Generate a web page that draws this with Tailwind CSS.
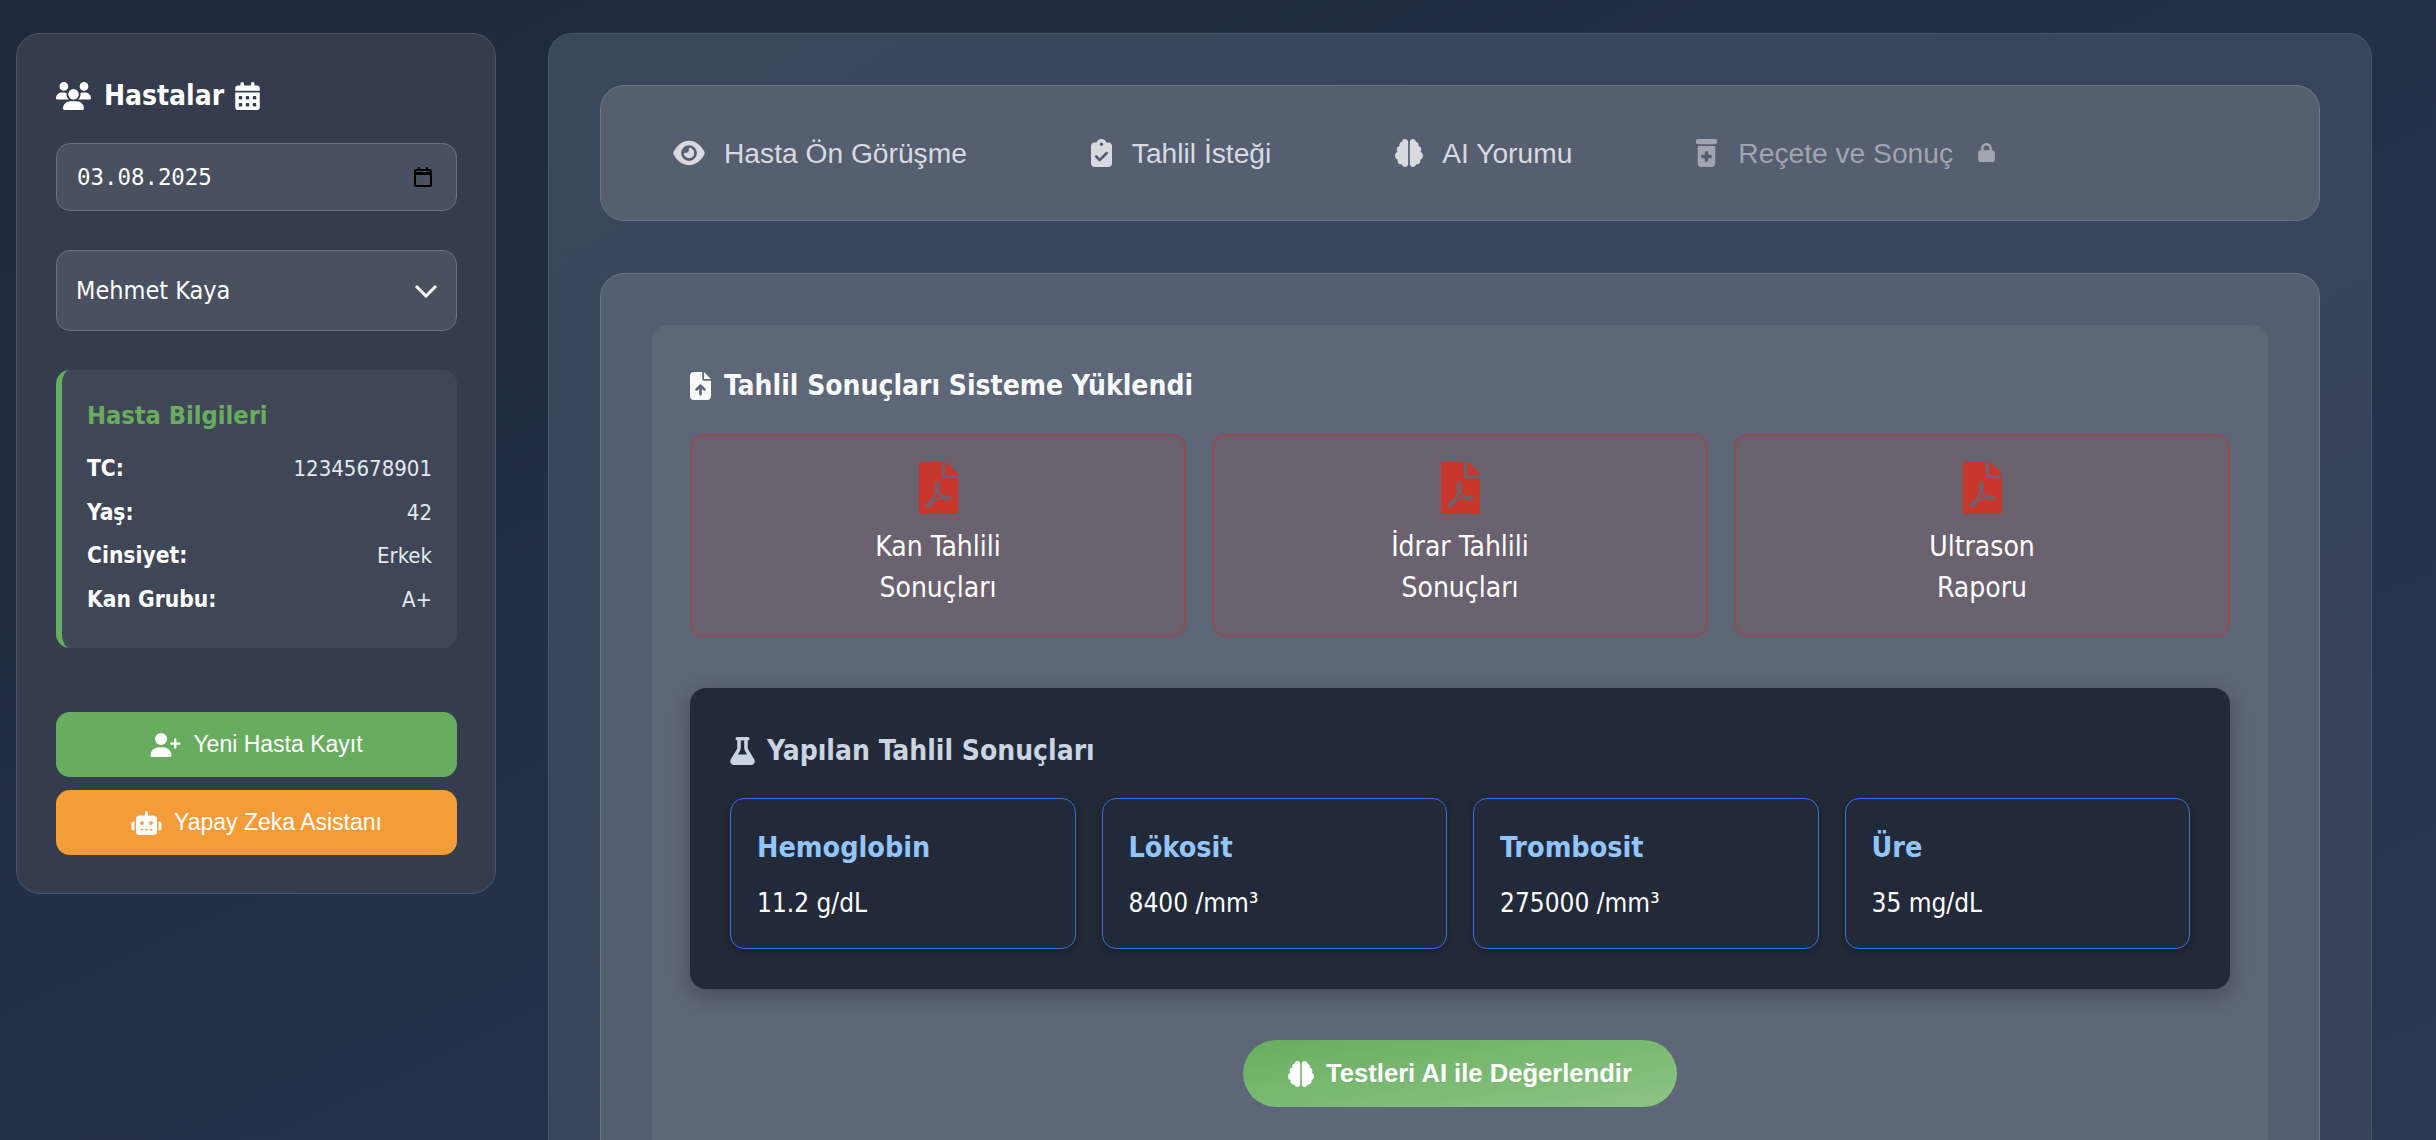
<!DOCTYPE html>
<html lang="tr">
  <head>
    <meta charset="UTF-8" />
    <script src="https://cdn.jsdelivr.net/npm/@tailwindcss/browser@4"></script>
  </head>
  <body class="h-[1140px] overflow-hidden bg-gradient-to-br from-[#1e293b] to-[#2b3753] font-['DejaVu_Sans',sans-serif] font-stretch-condensed text-white">
    <div class="flex items-start gap-[52px] pl-4 pr-16 pt-[33px]">
      <!-- Sidebar -->
      <aside class="flex h-[861px] w-[480px] shrink-0 flex-col rounded-3xl border border-[#4c5566] bg-[#343c4d] pl-[39px] pr-[38px] pt-[38px]">
        <h2 class="flex h-[47px] items-center gap-[13px] text-[28px] font-bold">
          <svg class="h-7 w-[35px] fill-white" viewBox="0 0 640 512"><path d="M144 0a80 80 0 1 1 0 160A80 80 0 1 1 144 0zM512 0a80 80 0 1 1 0 160A80 80 0 1 1 512 0zM0 298.7C0 239.8 47.8 192 106.7 192h42.7c15.9 0 31 3.5 44.6 9.7c-1.3 7.2-1.9 14.7-1.9 22.3c0 38.2 16.8 72.5 43.3 96c-.2 0-.4 0-.7 0H21.3C9.6 320 0 310.4 0 298.7zM405.3 320c-.2 0-.4 0-.7 0c26.6-23.5 43.3-57.8 43.3-96c0-7.6-.7-15-1.9-22.3c13.6-6.3 28.7-9.7 44.6-9.7h42.7C592.2 192 640 239.8 640 298.7c0 11.8-9.6 21.3-21.3 21.3H405.3zM224 224a96 96 0 1 1 192 0 96 96 0 1 1 -192 0zM128 485.3C128 411.7 187.7 352 261.3 352H378.7C452.3 352 512 411.7 512 485.3c0 14.7-11.9 26.7-26.7 26.7H154.7c-14.7 0-26.7-11.9-26.7-26.7z"/></svg>
          <span>Hastalar</span>
          <svg class="-ml-[2px] h-7 w-[25px] fill-white" viewBox="0 0 448 512"><path d="M128 0c17.7 0 32 14.3 32 32V64H288V32c0-17.7 14.3-32 32-32s32 14.3 32 32V64h48c26.5 0 48 21.5 48 48v48H0V112C0 85.5 21.5 64 48 64H96V32c0-17.7 14.3-32 32-32zM0 192H448V464c0 26.5-21.5 48-48 48H48c-26.5 0-48-21.5-48-48V192zm64 80v32c0 8.8 7.2 16 16 16h32c8.8 0 16-7.2 16-16V272c0-8.8-7.2-16-16-16H80c-8.8 0-16 7.2-16 16zm128 0v32c0 8.8 7.2 16 16 16h32c8.8 0 16-7.2 16-16V272c0-8.8-7.2-16-16-16H208c-8.8 0-16 7.2-16 16zm144-16c-8.8 0-16 7.2-16 16v32c0 8.8 7.2 16 16 16h32c8.8 0 16-7.2 16-16V272c0-8.8-7.2-16-16-16H336zM64 400v32c0 8.8 7.2 16 16 16h32c8.8 0 16-7.2 16-16V400c0-8.8-7.2-16-16-16H80c-8.8 0-16 7.2-16 16zm144-16c-8.8 0-16 7.2-16 16v32c0 8.8 7.2 16 16 16h32c8.8 0 16-7.2 16-16V400c0-8.8-7.2-16-16-16H208zm112 16v32c0 8.8 7.2 16 16 16h32c8.8 0 16-7.2 16-16V400c0-8.8-7.2-16-16-16H336c-8.8 0-16 7.2-16 16z"/></svg>
        </h2>

        <div class="mt-[24px] flex h-[68px] items-center justify-between rounded-[14px] border border-[#69707f] bg-[#495060] pl-5 pr-[24px] font-['DejaVu_Sans_Mono',monospace] text-[22.4px] [font-stretch:normal]">
          <span class="pt-[2px]">03.08.2025</span>
          <svg class="h-5 w-[18px]" viewBox="0 0 18 20" fill="none" stroke="#000" stroke-width="2"><rect x="1" y="3" width="16" height="16" rx="1.5"/><path d="M1 6.5h16" stroke-width="3"/><path d="M5 0v3M13 0v3"/></svg>
        </div>

        <div class="mt-[39px] flex h-[81px] items-center justify-between rounded-[14px] border border-[#69707f] bg-[#495060] pl-[19px] pr-[18px] text-[25px]">
          <span>Mehmet Kaya</span>
          <svg class="h-[14px] w-[24px]" viewBox="0 0 24 14" fill="none" stroke="#fff" stroke-width="3"><path d="M2 2l10 10L22 2"/></svg>
        </div>

        <section class="mt-[39px] h-[278px] rounded-[14px] border-l-[6px] border-[#68ad5f] bg-[#3f4757] pl-[25px] pr-[25px] pt-[30px]">
          <h3 class="text-[25.2px] font-bold leading-[32px] text-[#68ad5f]">Hasta Bilgileri</h3>
          <dl class="mt-[15px] flex flex-col text-[22px] leading-[43.5px]">
            <div class="flex justify-between"><dt class="text-[22.6px] font-bold">TC:</dt><dd class="text-[#e2e8f0]">12345678901</dd></div>
            <div class="flex justify-between"><dt class="text-[22.6px] font-bold">Yaş:</dt><dd class="text-[#e2e8f0]">42</dd></div>
            <div class="flex justify-between"><dt class="text-[22.6px] font-bold">Cinsiyet:</dt><dd class="text-[#e2e8f0]">Erkek</dd></div>
            <div class="flex justify-between"><dt class="text-[22.6px] font-bold">Kan Grubu:</dt><dd class="text-[#e2e8f0]">A+</dd></div>
          </dl>
        </section>

        <div class="mt-[64px] flex flex-col gap-[13px] font-['Liberation_Sans',sans-serif] text-[23px] [font-stretch:normal]">
          <div class="flex h-[65px] items-center justify-center gap-[12px] rounded-[14px] bg-[#68ad5f]">
            <svg class="h-[24px] w-[31px] fill-white" viewBox="0 0 640 512"><path d="M96 128a128 128 0 1 1 256 0A128 128 0 1 1 96 128zM0 482.3C0 383.8 79.8 304 178.3 304h91.4C368.2 304 448 383.8 448 482.3c0 16.4-13.3 29.7-29.7 29.7H29.7C13.3 512 0 498.7 0 482.3zM504 312V248H440c-13.3 0-24-10.7-24-24s10.7-24 24-24h64V136c0-13.3 10.7-24 24-24s24 10.7 24 24v64h64c13.3 0 24 10.7 24 24s-10.7 24-24 24H552v64c0 13.3-10.7 24-24 24s-24-10.7-24-24z"/></svg>
            <span>Yeni Hasta Kayıt</span>
          </div>
          <div class="flex h-[65px] items-center justify-center gap-[12px] rounded-[14px] bg-[#f39c38]">
            <svg class="h-[24px] w-[31px] fill-white" viewBox="0 0 640 512"><path d="M320 0c17.7 0 32 14.3 32 32V96H472c39.8 0 72 32.2 72 72V440c0 39.8-32.2 72-72 72H168c-39.8 0-72-32.2-72-72V168c0-39.8 32.2-72 72-72H288V32c0-17.7 14.3-32 32-32zM208 384c-8.8 0-16 7.2-16 16s7.2 16 16 16h32c8.8 0 16-7.2 16-16s-7.2-16-16-16H208zm96 0c-8.8 0-16 7.2-16 16s7.2 16 16 16h32c8.8 0 16-7.2 16-16s-7.2-16-16-16H304zm96 0c-8.8 0-16 7.2-16 16s7.2 16 16 16h32c8.8 0 16-7.2 16-16s-7.2-16-16-16H400zM264 256a40 40 0 1 0 -80 0 40 40 0 1 0 80 0zm152 40a40 40 0 1 0 0-80 40 40 0 1 0 0 80zM48 224H64V416H48c-26.5 0-48-21.5-48-48V272c0-26.5 21.5-48 48-48zm544 0c26.5 0 48 21.5 48 48v96c0 26.5-21.5 48-48 48H576V224h16z"/></svg>
            <span>Yapay Zeka Asistanı</span>
          </div>
        </div>
      </aside>

      <!-- Main -->
      <main class="h-[1200px] w-[1824px] shrink-0 rounded-3xl border border-[#4b5669] bg-gradient-to-br from-[#3a465a] to-[#38435a] px-[51px] pt-[51px]">
        <!-- Tabs -->
        <nav class="flex h-[136px] items-center gap-[124px] rounded-[24px] border border-[#6c7585] bg-[#565f70] pl-[72px] font-['Liberation_Sans',sans-serif] text-[28.2px] text-[#d7dae0] [font-stretch:normal]">
          <div class="flex items-center gap-[19px]">
            <svg class="h-7 w-[32px] fill-[#d7dae0]" viewBox="0 0 576 512"><path d="M288 32c-80.8 0-145.5 36.8-192.6 80.6C48.6 156 17.3 208 2.5 243.7c-3.3 7.9-3.3 16.7 0 24.6C17.3 304 48.6 356 95.4 399.4C142.5 443.2 207.2 480 288 480s145.5-36.8 192.6-80.6c46.8-43.5 78.1-95.4 93-131.1c3.3-7.9 3.3-16.7 0-24.6c-14.9-35.7-46.2-87.7-93-131.1C433.5 68.8 368.8 32 288 32zM144 256a144 144 0 1 1 288 0 144 144 0 1 1 -288 0zm144-64c0 35.3-28.7 64-64 64c-7.1 0-13.9-1.2-20.3-3.3c-5.5-1.8-11.9 1.6-11.7 7.4c.3 6.9 1.3 13.8 3.2 20.7c13.7 51.2 66.4 81.6 117.6 67.9s81.6-66.4 67.9-117.6c-11.1-41.5-47.8-69.4-88.6-71.1c-5.8-.2-9.2 6.1-7.4 11.7c2.1 6.4 3.3 13.2 3.3 20.3z"/></svg>
            <span>Hasta Ön Görüşme</span>
          </div>
          <div class="flex items-center gap-[20px]">
            <svg class="h-7 w-[21px] fill-[#d7dae0]" viewBox="0 0 384 512"><path d="M192 0c-41.8 0-77.4 26.7-90.5 64H64C28.7 64 0 92.7 0 128V448c0 35.3 28.7 64 64 64H320c35.3 0 64-28.7 64-64V128c0-35.3-28.7-64-64-64H282.5C269.4 26.7 233.8 0 192 0zm0 64a32 32 0 1 1 0 64 32 32 0 1 1 0-64zM305 273L177 401c-9.4 9.4-24.6 9.4-33.9 0L79 337c-9.4-9.4-9.4-24.6 0-33.9s24.6-9.4 33.9 0l47 47L271 239c9.4-9.4 24.6-9.4 33.9 0s9.4 24.6 0 33.9z"/></svg>
            <span>Tahlil İsteği</span>
          </div>
          <div class="flex items-center gap-[19px]">
            <svg class="h-7 w-7 fill-[#d7dae0]" viewBox="0 0 512 512"><path d="M184 0c30.9 0 56 25.1 56 56V456c0 30.9-25.1 56-56 56c-28.9 0-52.7-21.9-55.7-50.1c-5.2 1.4-10.7 2.1-16.3 2.1c-35.3 0-64-28.7-64-64c0-7.4 1.3-14.6 3.6-21.2C21.4 367.4 0 338.2 0 304c0-31.9 18.7-59.5 45.8-72.3C37.1 220.8 32 207 32 192c0-30.7 21.6-56.3 50.4-62.6C80.8 123.9 80 118 80 112c0-29.9 20.6-55.1 48.3-62.1C131.3 21.9 155.1 0 184 0zM328 0c28.9 0 52.6 21.9 55.7 49.9c27.8 7 48.3 32.1 48.3 62.1c0 6-.8 11.9-2.4 17.4c28.8 6.2 50.4 31.9 50.4 62.6c0 15-5.1 28.8-13.8 39.7C493.3 244.5 512 272.1 512 304c0 34.2-21.4 63.4-51.6 74.8c2.3 6.6 3.6 13.8 3.6 21.2c0 35.3-28.7 64-64 64c-5.6 0-11.1-.7-16.3-2.1c-3 28.2-26.8 50.1-55.7 50.1c-30.9 0-56-25.1-56-56V56c0-30.9 25.1-56 56-56z"/></svg>
            <span>AI Yorumu</span>
          </div>
          <div class="flex items-center gap-[21px] text-[#a0a5af]">
            <svg class="h-7 w-[21px] fill-[#a0a5af]" viewBox="0 0 384 512"><path d="M0 32C0 14.3 14.3 0 32 0H352c17.7 0 32 14.3 32 32V64c0 17.7-14.3 32-32 32H32C14.3 96 0 81.7 0 64V32zm32 96H352V448c0 35.3-28.7 64-64 64H96c-35.3 0-64-28.7-64-64V128zM160 240v48H112c-8.8 0-16 7.2-16 16v32c0 8.8 7.2 16 16 16h48v48c0 8.8 7.2 16 16 16h32c8.8 0 16-7.2 16-16V352h48c8.8 0 16-7.2 16-16V304c0-8.8-7.2-16-16-16H224V240c0-8.8-7.2-16-16-16H176c-8.8 0-16 7.2-16 16z"/></svg>
            <span>Reçete ve Sonuç</span>
            <svg class="ml-[4px] h-[19px] w-[17px] fill-[#a0a5af]" viewBox="0 0 448 512"><path d="M144 144v48H304V144c0-44.2-35.8-80-80-80s-80 35.8-80 80zM80 192V144C80 64.5 144.5 0 224 0s144 64.5 144 144v48h16c35.3 0 64 28.7 64 64V448c0 35.3-28.7 64-64 64H64c-35.3 0-64-28.7-64-64V256c0-35.3 28.7-64 64-64H80z"/></svg>
          </div>
        </nav>

        <!-- Content -->
        <section class="mt-[52px] h-[900px] rounded-[24px] border border-[#6c7585] bg-[#545f71] px-[51px] pt-[51px]">
          <div class="h-[860px] rounded-[16px] bg-[#5e6778] pl-[38px] pr-[38px] pt-[42px]">
            <h3 class="flex h-[38px] items-center gap-[13px] text-[28px] font-bold text-[#f8fafc]">
              <svg class="h-7 w-[21px] fill-[#f8fafc]" viewBox="0 0 384 512"><path d="M64 0C28.7 0 0 28.7 0 64V448c0 35.3 28.7 64 64 64H320c35.3 0 64-28.7 64-64V160H256c-17.7 0-32-14.3-32-32V0H64zM256 0V128H384L256 0zM216 408c0 13.3-10.7 24-24 24s-24-10.7-24-24V305.9l-31 31c-9.4 9.4-24.6 9.4-33.9 0s-9.4-24.6 0-33.9l72-72c9.4-9.4 24.6-9.4 33.9 0l72 72c9.4 9.4 9.4 24.6 0 33.9s-24.6 9.4-33.9 0l-31-31V408z"/></svg>
              <span>Tahlil Sonuçları Sisteme Yüklendi</span>
            </h3>

            <div class="mt-[29px] grid grid-cols-3 gap-[26px] text-center text-[28px] leading-[41px]">
              <div class="flex h-[203px] flex-col items-center rounded-[14px] border-2 border-[#8f4f57] bg-[#6b6270] pt-[26px]">
                <svg class="mb-[12px] h-[52px] w-[39px] fill-[#c9372c]" viewBox="0 0 384 512"><path d="M181.9 256.1c-5-16-4.9-46.9-2-46.9 8.4 0 7.6 36.9 2 46.9zm-1.7 47.2c-7.7 20.2-17.3 43.3-28.4 62.7 18.3-7 39-17.2 62.9-21.9-12.7-9.6-24.9-23.4-34.5-40.8zM86.1 428.1c0 .8 13.2-5.4 34.9-40.2-6.7 6.3-29.1 24.5-34.9 40.2zM248 160h136v328c0 13.3-10.7 24-24 24H24c-13.3 0-24-10.7-24-24V24C0 10.7 10.7 0 24 0h200v136c0 13.2 10.8 24 24 24zm-8 171.8c-20-12.2-33.3-29-42.7-53.8 4.5-18.5 11.6-46.6 6.2-64.2-4.7-29.4-42.4-26.5-47.8-6.8-5 18.3-.4 44.1 8.1 77-11.6 27.6-28.7 64.6-40.8 85.8-.1 0-.1.1-.2.1-27.1 13.9-73.6 44.5-54.5 68 5.6 6.9 16 10 21.5 10 17.9 0 35.7-18 61.1-61.8 25.8-8.5 54.1-19.1 79-23.2 21.7 11.8 47.1 19.5 64 19.5 29.2 0 31.2-32 19.7-43.4-13.9-13.6-54.3-9.7-73.6-7.2zM377 105L279 7c-4.5-4.5-10.6-7-17-7h-6v128h128v-6.1c0-6.3-2.5-12.4-7-16.9zm-74.1 255.3c4.1-2.7-2.5-11.9-42.8-9 37.1 15.8 42.8 9 42.8 9z"/></svg>
                <span>Kan Tahlili<br />Sonuçları</span>
              </div>
              <div class="flex h-[203px] flex-col items-center rounded-[14px] border-2 border-[#8f4f57] bg-[#6b6270] pt-[26px]">
                <svg class="mb-[12px] h-[52px] w-[39px] fill-[#c9372c]" viewBox="0 0 384 512"><path d="M181.9 256.1c-5-16-4.9-46.9-2-46.9 8.4 0 7.6 36.9 2 46.9zm-1.7 47.2c-7.7 20.2-17.3 43.3-28.4 62.7 18.3-7 39-17.2 62.9-21.9-12.7-9.6-24.9-23.4-34.5-40.8zM86.1 428.1c0 .8 13.2-5.4 34.9-40.2-6.7 6.3-29.1 24.5-34.9 40.2zM248 160h136v328c0 13.3-10.7 24-24 24H24c-13.3 0-24-10.7-24-24V24C0 10.7 10.7 0 24 0h200v136c0 13.2 10.8 24 24 24zm-8 171.8c-20-12.2-33.3-29-42.7-53.8 4.5-18.5 11.6-46.6 6.2-64.2-4.7-29.4-42.4-26.5-47.8-6.8-5 18.3-.4 44.1 8.1 77-11.6 27.6-28.7 64.6-40.8 85.8-.1 0-.1.1-.2.1-27.1 13.9-73.6 44.5-54.5 68 5.6 6.9 16 10 21.5 10 17.9 0 35.7-18 61.1-61.8 25.8-8.5 54.1-19.1 79-23.2 21.7 11.8 47.1 19.5 64 19.5 29.2 0 31.2-32 19.7-43.4-13.9-13.6-54.3-9.7-73.6-7.2zM377 105L279 7c-4.5-4.5-10.6-7-17-7h-6v128h128v-6.1c0-6.3-2.5-12.4-7-16.9zm-74.1 255.3c4.1-2.7-2.5-11.9-42.8-9 37.1 15.8 42.8 9 42.8 9z"/></svg>
                <span>İdrar Tahlili<br />Sonuçları</span>
              </div>
              <div class="flex h-[203px] flex-col items-center rounded-[14px] border-2 border-[#8f4f57] bg-[#6b6270] pt-[26px]">
                <svg class="mb-[12px] h-[52px] w-[39px] fill-[#c9372c]" viewBox="0 0 384 512"><path d="M181.9 256.1c-5-16-4.9-46.9-2-46.9 8.4 0 7.6 36.9 2 46.9zm-1.7 47.2c-7.7 20.2-17.3 43.3-28.4 62.7 18.3-7 39-17.2 62.9-21.9-12.7-9.6-24.9-23.4-34.5-40.8zM86.1 428.1c0 .8 13.2-5.4 34.9-40.2-6.7 6.3-29.1 24.5-34.9 40.2zM248 160h136v328c0 13.3-10.7 24-24 24H24c-13.3 0-24-10.7-24-24V24C0 10.7 10.7 0 24 0h200v136c0 13.2 10.8 24 24 24zm-8 171.8c-20-12.2-33.3-29-42.7-53.8 4.5-18.5 11.6-46.6 6.2-64.2-4.7-29.4-42.4-26.5-47.8-6.8-5 18.3-.4 44.1 8.1 77-11.6 27.6-28.7 64.6-40.8 85.8-.1 0-.1.1-.2.1-27.1 13.9-73.6 44.5-54.5 68 5.6 6.9 16 10 21.5 10 17.9 0 35.7-18 61.1-61.8 25.8-8.5 54.1-19.1 79-23.2 21.7 11.8 47.1 19.5 64 19.5 29.2 0 31.2-32 19.7-43.4-13.9-13.6-54.3-9.7-73.6-7.2zM377 105L279 7c-4.5-4.5-10.6-7-17-7h-6v128h128v-6.1c0-6.3-2.5-12.4-7-16.9zm-74.1 255.3c4.1-2.7-2.5-11.9-42.8-9 37.1 15.8 42.8 9 42.8 9z"/></svg>
                <span>Ultrason<br />Raporu</span>
              </div>
            </div>

            <!-- Results -->
            <div class="mt-[51px] h-[301px] rounded-[16px] bg-[#222938] px-10 pt-[41px] shadow-[0_6px_20px_rgba(0,0,0,0.3)]">
              <h4 class="flex h-[44px] items-center gap-[12px] text-[28px] font-bold text-[#cbd5e1]">
                <svg class="h-7 w-[25px] fill-[#cbd5e1]" viewBox="0 0 448 512"><path d="M288 0H160 128C110.3 0 96 14.3 96 32s14.3 32 32 32V196.8c0 11.8-3.3 23.5-9.5 33.5L10.3 406.2C3.6 417.2 0 429.7 0 442.6C0 480.9 31.1 512 69.4 512H378.6c38.3 0 69.4-31.1 69.4-69.4c0-12.8-3.6-25.4-10.3-36.4L329.5 230.4c-6.2-10.1-9.5-21.7-9.5-33.5V64c17.7 0 32-14.3 32-32s-14.3-32-32-32H288zM192 196.8V64h64V196.8c0 23.7 6.6 46.9 19 67.1L309.5 320h-171L173 263.9c12.4-20.2 19-43.4 19-67.1z"/></svg>
                <span>Yapılan Tahlil Sonuçları</span>
              </h4>
              <div class="mt-[25px] grid grid-cols-4 gap-[26px]">
                <div class="h-[151px] rounded-[14px] border border-[#3b6fd9] px-[26px] pt-[30px] shadow-[0_2px_8px_rgba(0,0,0,0.25)]">
                  <div class="text-[28.5px] font-bold leading-[38px] text-[#93c5fd]">Hemoglobin</div>
                  <div class="mt-[20px] text-[26px] leading-[32px]">11.2 g/dL</div>
                </div>
                <div class="h-[151px] rounded-[14px] border border-[#3b6fd9] px-[26px] pt-[30px] shadow-[0_2px_8px_rgba(0,0,0,0.25)]">
                  <div class="text-[28.5px] font-bold leading-[38px] text-[#93c5fd]">Lökosit</div>
                  <div class="mt-[20px] text-[26px] leading-[32px]">8400 /mm³</div>
                </div>
                <div class="h-[151px] rounded-[14px] border border-[#3b6fd9] px-[26px] pt-[30px] shadow-[0_2px_8px_rgba(0,0,0,0.25)]">
                  <div class="text-[28.5px] font-bold leading-[38px] text-[#93c5fd]">Trombosit</div>
                  <div class="mt-[20px] text-[26px] leading-[32px]">275000 /mm³</div>
                </div>
                <div class="h-[151px] rounded-[14px] border border-[#3b6fd9] px-[26px] pt-[30px] shadow-[0_2px_8px_rgba(0,0,0,0.25)]">
                  <div class="text-[28.5px] font-bold leading-[38px] text-[#93c5fd]">Üre</div>
                  <div class="mt-[20px] text-[26px] leading-[32px]">35 mg/dL</div>
                </div>
              </div>
            </div>

            <div class="mt-[51px] flex justify-center">
              <div class="flex h-[67px] w-[434px] items-center justify-center gap-[12px] rounded-full bg-gradient-to-br from-[#68ae5e] to-[#8dc486] font-['Liberation_Sans',sans-serif] text-[25.6px] font-bold [font-stretch:normal]">
                <svg class="h-[26px] w-[26px] fill-white" viewBox="0 0 512 512"><path d="M184 0c30.9 0 56 25.1 56 56V456c0 30.9-25.1 56-56 56c-28.9 0-52.7-21.9-55.7-50.1c-5.2 1.4-10.7 2.1-16.3 2.1c-35.3 0-64-28.7-64-64c0-7.4 1.3-14.6 3.6-21.2C21.4 367.4 0 338.2 0 304c0-31.9 18.7-59.5 45.8-72.3C37.1 220.8 32 207 32 192c0-30.7 21.6-56.3 50.4-62.6C80.8 123.9 80 118 80 112c0-29.9 20.6-55.1 48.3-62.1C131.3 21.9 155.1 0 184 0zM328 0c28.9 0 52.6 21.9 55.7 49.9c27.8 7 48.3 32.1 48.3 62.1c0 6-.8 11.9-2.4 17.4c28.8 6.2 50.4 31.9 50.4 62.6c0 15-5.1 28.8-13.8 39.7C493.3 244.5 512 272.1 512 304c0 34.2-21.4 63.4-51.6 74.8c2.3 6.6 3.6 13.8 3.6 21.2c0 35.3-28.7 64-64 64c-5.6 0-11.1-.7-16.3-2.1c-3 28.2-26.8 50.1-55.7 50.1c-30.9 0-56-25.1-56-56V56c0-30.9 25.1-56 56-56z"/></svg>
                <span>Testleri AI ile Değerlendir</span>
              </div>
            </div>
          </div>
        </section>
      </main>
    </div>
  </body>
</html>
